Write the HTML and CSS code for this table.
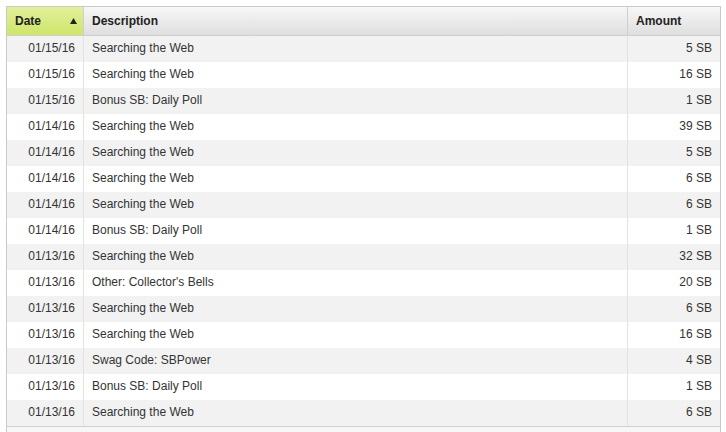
FILE: index.html
```html
<!DOCTYPE html>
<html>
<head>
<meta charset="utf-8">
<link rel="stylesheet" href="styles.css">
</head>
<body>
<table class="grid">
  <thead>
    <tr>
      <th class="c-date sorted"><span class="hd">Date<svg class="arrow" width="7" height="6" viewBox="0 0 7 6"><polygon points="3.5,0 7,6 0,6" fill="#222"/></svg></span></th>
      <th class="c-desc">Description</th>
      <th class="c-amt">Amount</th>
    </tr>
  </thead>
  <tbody>
    <tr><td class="c-date">01/15/16</td><td class="c-desc">Searching the Web</td><td class="c-amt">5 SB</td></tr>
    <tr><td class="c-date">01/15/16</td><td class="c-desc">Searching the Web</td><td class="c-amt">16 SB</td></tr>
    <tr><td class="c-date">01/15/16</td><td class="c-desc">Bonus SB: Daily Poll</td><td class="c-amt">1 SB</td></tr>
    <tr><td class="c-date">01/14/16</td><td class="c-desc">Searching the Web</td><td class="c-amt">39 SB</td></tr>
    <tr><td class="c-date">01/14/16</td><td class="c-desc">Searching the Web</td><td class="c-amt">5 SB</td></tr>
    <tr><td class="c-date">01/14/16</td><td class="c-desc">Searching the Web</td><td class="c-amt">6 SB</td></tr>
    <tr><td class="c-date">01/14/16</td><td class="c-desc">Searching the Web</td><td class="c-amt">6 SB</td></tr>
    <tr><td class="c-date">01/14/16</td><td class="c-desc">Bonus SB: Daily Poll</td><td class="c-amt">1 SB</td></tr>
    <tr><td class="c-date">01/13/16</td><td class="c-desc">Searching the Web</td><td class="c-amt">32 SB</td></tr>
    <tr><td class="c-date">01/13/16</td><td class="c-desc">Other: Collector's Bells</td><td class="c-amt">20 SB</td></tr>
    <tr><td class="c-date">01/13/16</td><td class="c-desc">Searching the Web</td><td class="c-amt">6 SB</td></tr>
    <tr><td class="c-date">01/13/16</td><td class="c-desc">Searching the Web</td><td class="c-amt">16 SB</td></tr>
    <tr><td class="c-date">01/13/16</td><td class="c-desc">Swag Code: SBPower</td><td class="c-amt">4 SB</td></tr>
    <tr><td class="c-date">01/13/16</td><td class="c-desc">Bonus SB: Daily Poll</td><td class="c-amt">1 SB</td></tr>
    <tr><td class="c-date">01/13/16</td><td class="c-desc">Searching the Web</td><td class="c-amt">6 SB</td></tr>
  </tbody>
  <tfoot>
    <tr><td class="foot" colspan="3"></td></tr>
  </tfoot>
</table>
</body>
</html>
```

FILE: styles.css
```css
html, body {
  margin: 0;
  padding: 0;
  background: #ffffff;
}
body {
  padding: 6px 0 0 6px;
  font-family: "Liberation Sans", Arial, sans-serif;
  font-size: 12px;
  color: #333333;
}
.grid {
  border-collapse: separate;
  border-spacing: 0;
  table-layout: fixed;
  width: 715px;
  border: 1px solid #c9c9c9;
  border-bottom: none;
}
.grid th,
.grid td {
  box-sizing: border-box;
  padding: 0 8px;
  white-space: nowrap;
  overflow: hidden;
}
.grid th {
  height: 29px;
  border-bottom: 1px solid #cfcfcf;
  background: linear-gradient(#f7f7f7, #dedede);
  font-weight: bold;
  color: #222222;
  text-align: left;
}
.grid th.sorted {
  background: linear-gradient(#e1f09a, #cfe56a);
}
.grid th + th {
  border-left: 1px solid #cfcfcf;
}
.grid td {
  height: 26px;
  padding-bottom: 2px;
}
.grid td + td {
  border-left: 1px solid #e3e3e3;
}
.grid tbody tr:nth-child(odd) td {
  background: #f2f2f2;
}
.c-date { width: 76px; }
.c-desc { width: 544px; }
.c-amt { width: 93px; }
.grid td.c-date,
.grid td.c-amt {
  text-align: right;
}
.hd {
  display: flex;
  align-items: center;
  justify-content: space-between;
}
.arrow {
  display: block;
  margin-right: -2px;
}
.grid td.foot {
  height: 6px;
  padding: 0;
  border-top: 1px solid #cfcfcf;
  background: #f7f7f7;
}
```
